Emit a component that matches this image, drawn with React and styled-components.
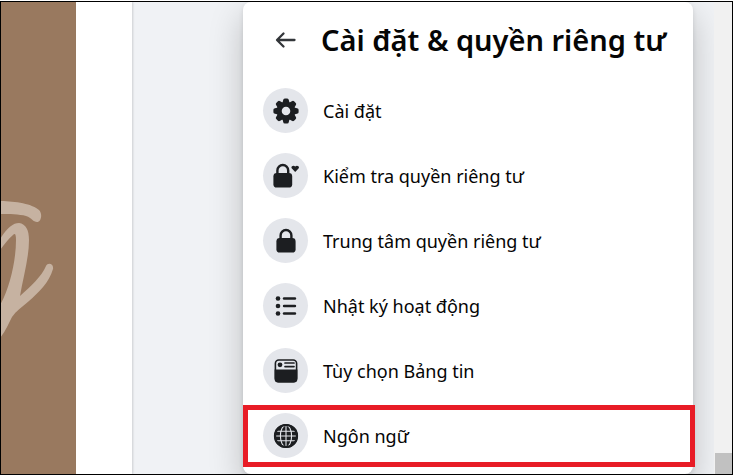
import React from 'react';
import styled, { createGlobalStyle } from 'styled-components';

const GlobalStyle = createGlobalStyle`
    * {
        box-sizing: border-box;
    }

    body {
        margin: 0;
        background-color: #ffffff;
        font-family: 'Noto Sans', 'Open Sans', sans-serif;
        color: #050505;
    }
`;

const Page = styled.div`
    padding-top: 1px;
    min-height: 100vh;
    display: flex;
`;

const Frame = styled.div`
    flex: 1;
    display: flex;
    overflow: hidden;
    border: 1px solid #000000;
    background-color: #f0f2f5;
`;

const Cover = styled.div`
    flex: 0 0 75px;
    background-color: #99795f;
    display: flex;
    align-items: flex-start;
    padding-top: 192px;
`;

const Sheet = styled.div`
    flex: 0 0 56px;
    background-color: #ffffff;
    box-shadow: 1px 0 2px rgba(0, 0, 0, 0.15);
`;

const Gutter = styled.div`
    flex: 1 1 0;
`;

const Menu = styled.nav`
    position: relative;
    flex: 0 1 450px;
    margin-right: 21px;
    padding-bottom: 5px;
    background-color: #ffffff;
    border-radius: 8px;
    box-shadow: 0 14px 34px rgba(0, 0, 0, 0.22), 0 2px 5px rgba(0, 0, 0, 0.1);
`;

const MenuHeader = styled.header`
    display: flex;
    align-items: center;
    gap: 13px;
    height: 76px;
    padding: 0 20px;
`;

const BackButton = styled.button`
    display: flex;
    align-items: center;
    justify-content: center;
    width: 45px;
    height: 45px;
    padding: 0;
    border: none;
    background: none;
    cursor: pointer;
`;

const Title = styled.h1`
    margin: 0;
    font-size: 29px;
    line-height: 38px;
    font-weight: 600;
    white-space: nowrap;
`;

const List = styled.ul`
    margin: 0;
    padding: 0;
    list-style: none;
`;

const Item = styled.li`
    position: relative;

    &::after {
        content: ${props => (props.$marked ? "''" : 'none')};
        position: absolute;
        inset: 2px -2px 1px 0;
        border: 5px solid #e81c26;
        pointer-events: none;
    }
`;

const ItemButton = styled.button`
    display: flex;
    align-items: center;
    gap: 15px;
    width: 100%;
    height: 65px;
    padding: 0 20px;
    border: none;
    background: none;
    color: inherit;
    font-family: inherit;
    font-size: 18px;
    font-weight: 400;
    line-height: 24px;
    text-align: left;
    cursor: pointer;
`;

const IconCircle = styled.span`
    display: flex;
    align-items: center;
    justify-content: center;
    flex: none;
    width: 45px;
    height: 45px;
    border-radius: 50%;
    background-color: #e4e6eb;
    color: #1c1e21;
`;

const Scrollbar = styled.div`
    position: relative;
    flex: 0 0 18px;
    display: flex;
    flex-direction: column;
    justify-content: flex-end;
    background-color: #f1f1f1;
`;

const Thumb = styled.div`
    height: 21px;
    margin-left: 1px;
    background-color: #c1c1c1;
`;

const Lettering = () => (
    <svg width="75" height="160" viewBox="1 194 75 160" fill="#c6b2a1" aria-hidden="true">
        <path d="M0 201C14 201 33 204 39 210C43 214 41 222 37 222C33 222 32 218 26 216C19 214 8 214 0 214Z" />
        <path d="M0 239C7 228 13 223 19 223C26 224 29 230 29 240C29 258 23 278 20 296C30 287 42 276 46 266C48 262 54 264 53 269C49 283 38 293 29 301C22 307 16 311 12 317C9 323 5 332 0 338V305C9 290 16 262 16 240C16 234 15 233 13 235C8 239 5 244 0 250Z" />
    </svg>
);

const ArrowIcon = () => (
    <svg width="22" height="22" viewBox="0 0 22 22" fill="none" stroke="#33363a" strokeWidth="2.3" strokeLinecap="round" strokeLinejoin="round" aria-hidden="true">
        <path d="M19.5 11H2.5M8.5 4.5L2 11L8.5 17.5" />
    </svg>
);

const teeth = [0, 45, 90, 135, 180, 225, 270, 315];

const GearIcon = () => (
    <svg width="26" height="26" viewBox="0 0 26 26" aria-hidden="true">
        {teeth.map(angle => (
            <path key={angle} d="M9.2 6L10.2 2Q10.4 .4 11.8 .4H14.2Q15.6 .4 15.8 2L16.8 6Z" fill="currentColor" transform={`rotate(${angle} 13 13)`} />
        ))}
        <circle cx="13" cy="13" r="6.8" fill="none" stroke="currentColor" strokeWidth="5" />
    </svg>
);

const PrivacyCheckIcon = () => (
    <svg width="26" height="26" viewBox="0 0 26 26" aria-hidden="true">
        <path d="M4.4 12V7.4a5.4 5.4 0 0 1 10.8 0V12" fill="none" stroke="currentColor" strokeWidth="2.4" />
        <rect x="0.4" y="10" width="18.8" height="14.6" rx="3.4" fill="currentColor" />
        <path d="M22.2 9L18.9 5.6C17.3 3.6 20.3 1.4 22.2 3.5C24.1 1.4 27.1 3.6 25.5 5.6Z" fill="currentColor" />
    </svg>
);

const LockIcon = () => (
    <svg width="26" height="26" viewBox="0 0 26 26" aria-hidden="true">
        <path d="M7.6 12V7.4a5.4 5.4 0 0 1 10.8 0V12" fill="none" stroke="currentColor" strokeWidth="2.4" />
        <rect x="3.4" y="10" width="19.2" height="14.6" rx="3.4" fill="currentColor" />
    </svg>
);

const ActivityIcon = () => (
    <svg width="26" height="26" viewBox="0 0 26 26" fill="currentColor" aria-hidden="true">
        {[5.5, 13, 20.5].map(y => (
            <g key={y}>
                <circle cx="5" cy={y} r="2.3" />
                <rect x="9.8" y={y - 1.3} width="13.4" height="2.6" rx="1.3" />
            </g>
        ))}
    </svg>
);

const FeedIcon = () => (
    <svg width="26" height="26" viewBox="0 0 26 26" aria-hidden="true">
        <rect x="2.4" y="2" width="21.2" height="21.6" rx="3.4" fill="none" stroke="currentColor" strokeWidth="1.6" />
        <path d="M1.6 11.4H24.4V21a3.6 3.6 0 0 1-3.6 3.6H5.2A3.6 3.6 0 0 1 1.6 21Z" fill="currentColor" />
        <circle cx="7" cy="6.8" r="2.4" fill="currentColor" />
        <path d="M12 5H21M12 8.6H21" stroke="currentColor" strokeWidth="1.7" strokeLinecap="round" />
    </svg>
);

const GlobeIcon = () => (
    <svg width="26" height="26" viewBox="0 0 26 26" aria-hidden="true">
        <circle cx="13" cy="13" r="12" fill="currentColor" />
        <g fill="none" stroke="#e4e6eb" strokeWidth="1.1">
            <path d="M13 2.5V23.5M2.5 13H23.5M4 8.3H22M4 17.7H22" />
            <ellipse cx="13" cy="13" rx="5.6" ry="10.8" />
        </g>
        <circle cx="13" cy="13" r="11" fill="none" stroke="currentColor" strokeWidth="2.2" />
    </svg>
);

const items = [
    { name: 'Cài đặt', Icon: GearIcon },
    { name: 'Kiểm tra quyền riêng tư', Icon: PrivacyCheckIcon },
    { name: 'Trung tâm quyền riêng tư', Icon: LockIcon },
    { name: 'Nhật ký hoạt động', Icon: ActivityIcon },
    { name: 'Tùy chọn Bảng tin', Icon: FeedIcon },
    { name: 'Ngôn ngữ', Icon: GlobeIcon, marked: true },
];

const App = () => (
    <>
        <GlobalStyle />
        <Page>
            <Frame>
                <Cover>
                    <Lettering />
                </Cover>
                <Sheet />
                <Gutter />
                <Menu>
                    <MenuHeader>
                        <BackButton type="button" aria-label="Quay lại">
                            <ArrowIcon />
                        </BackButton>
                        <Title>Cài đặt &amp; quyền riêng tư</Title>
                    </MenuHeader>
                    <List>
                        {items.map(({ name, Icon, marked }) => (
                            <Item key={name} $marked={marked}>
                                <ItemButton type="button">
                                    <IconCircle>
                                        <Icon />
                                    </IconCircle>
                                    {name}
                                </ItemButton>
                            </Item>
                        ))}
                    </List>
                </Menu>
                <Scrollbar>
                    <Thumb />
                </Scrollbar>
            </Frame>
        </Page>
    </>
);

export default App;
